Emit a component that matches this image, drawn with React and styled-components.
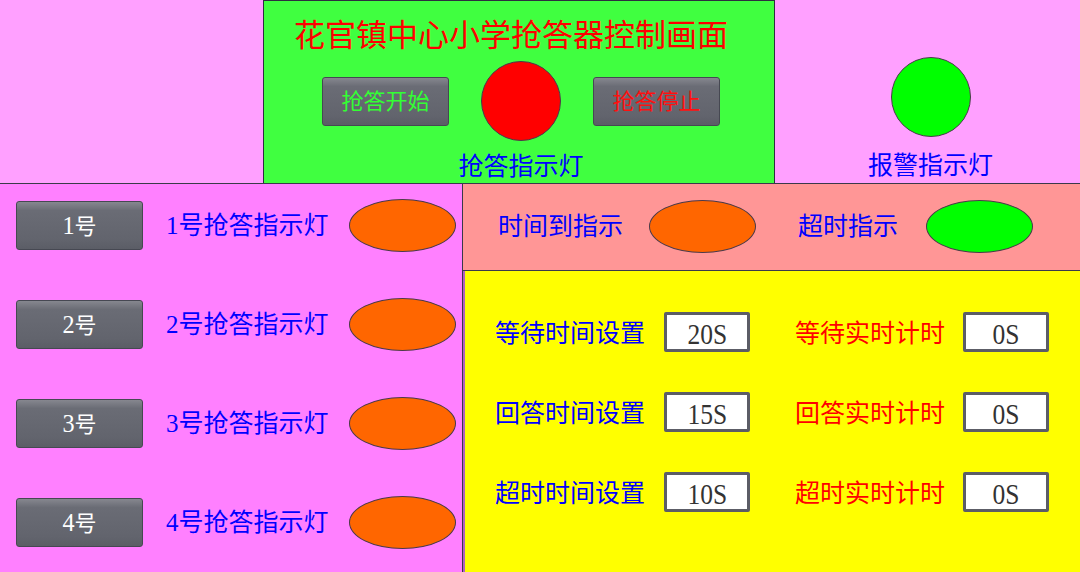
import React from "react";
import styled, { createGlobalStyle } from "styled-components";

const Global = createGlobalStyle`
  html, body { margin: 0; padding: 0; }
  body {
    font-family: "Liberation Serif", "Noto Sans CJK SC", serif;
    background: #ff80ff;
  }
`;

const Page = styled.div`
  width: 1080px;
  height: 572px;
  display: grid;
  grid-template-rows: 184px 1fr;
  overflow: hidden;
`;

const TopBar = styled.div`
  display: flex;
  background: #ffa0ff;
  border-bottom: 1px solid #3a3a4a;
  box-sizing: border-box;
`;

const Spacer = styled.div`
  width: ${(p) => p.$w}px;
  flex: none;
`;

const ControlPanel = styled.section`
  width: 512px;
  flex: none;
  box-sizing: border-box;
  background: #40ff40;
  border: 1px solid #2e2e40;
  border-bottom: none;
  display: flex;
  flex-direction: column;
  align-items: center;
  padding-top: 19px;
  padding-left: 4px;
`;

const Title = styled.h1`
  margin: 0 0 0 -20px;
  font-size: 31px;
  line-height: 31px;
  font-weight: normal;
  color: #ff0000;
  white-space: nowrap;
`;

const ControlRow = styled.div`
  display: flex;
  align-items: center;
  gap: 32px;
  margin-top: 10px;
  height: 80px;
`;

const GrayButton = styled.button`
  width: ${(p) => p.$w || 127}px;
  height: 49px;
  box-sizing: border-box;
  border: 1px solid #464852;
  border-radius: 3px;
  background: linear-gradient(#86878f 0%, #6a6c75 18%, #62646d 80%, #5b5d66 100%);
  color: ${(p) => p.$color};
  font-family: "Liberation Serif", "Noto Sans CJK SC", serif;
  font-size: 22px;
  line-height: 1;
  padding: 2px 0 0;
  display: flex;
  align-items: center;
  justify-content: center;
  flex: none;
  cursor: pointer;
`;

const Digit = styled.span`
  font-size: 1.1em;
  line-height: 1;
`;

const Lamp = styled.div`
  width: ${(p) => p.$w}px;
  height: ${(p) => p.$h}px;
  border-radius: 50%;
  background: ${(p) => p.$color};
  border: 1px solid #4a3a4a;
  box-sizing: border-box;
  flex: none;
`;

const Caption = styled.div`
  font-size: 25px;
  line-height: 25px;
  color: #0000ff;
  white-space: nowrap;
  margin-top: ${(p) => p.$mt || 0}px;
`;

const AlarmArea = styled.section`
  flex: 1;
  display: flex;
  flex-direction: column;
  align-items: center;
  padding-top: 57px;
  padding-left: 6px;
`;

const Bottom = styled.div`
  display: flex;
  min-height: 0;
`;

const Stations = styled.section`
  width: 463px;
  flex: none;
  box-sizing: border-box;
  background: #ff80ff;
  border-right: 1px solid #3a3a4a;
  display: flex;
  flex-direction: column;
  gap: 46px;
  padding: 15px 0 0 16px;
`;

const StationRow = styled.div`
  display: flex;
  align-items: center;
  height: 53px;
`;

const StationLabel = styled.div`
  width: 183px;
  margin-left: 23px;
  font-size: 25px;
  line-height: 25px;
  color: #0000ff;
  white-space: nowrap;
`;

const RightCol = styled.div`
  flex: 1;
  display: flex;
  flex-direction: column;
`;

const StatusBar = styled.section`
  height: 87px;
  box-sizing: border-box;
  background: #ff9696;
  border-bottom: 1px solid #3a3a4a;
  display: flex;
  align-items: center;
  padding-left: 35px;
  padding-bottom: 1px;
`;

const StatusLabel = styled.div`
  width: ${(p) => p.$w}px;
  margin-left: ${(p) => p.$ml || 0}px;
  flex: none;
  font-size: 25px;
  line-height: 25px;
  color: #0000ff;
  white-space: nowrap;
`;

const TimerPanel = styled.section`
  flex: 1;
  background: #ffff00;
  border-left: 2px solid #b060c0;
  display: grid;
  grid-template-columns: 169px 86px 45px 168px 86px;
  grid-auto-rows: 40px;
  row-gap: 40px;
  align-content: start;
  align-items: center;
  padding: 41px 0 0 30px;
`;

const TimerLabel = styled.div`
  font-size: 25px;
  line-height: 25px;
  padding-top: 3px;
  color: ${(p) => p.$color};
  white-space: nowrap;
  grid-column: ${(p) => p.$col};
`;

const ValueBox = styled.div`
  height: 40px;
  box-sizing: border-box;
  border: 3px solid #5c5d66;
  border-radius: 2px;
  background: #ffffff;
  color: #333333;
  font-size: 30px;
  line-height: 1;
  display: flex;
  align-items: center;
  justify-content: center;
  padding-top: 3px;
  grid-column: ${(p) => p.$col};
`;

const ValueText = styled.span`
  display: inline-block;
  transform: scaleX(0.85);
`;

const stations = [1, 2, 3, 4];
const timers = [
  ["等待时间设置", "20S", "等待实时计时", "0S"],
  ["回答时间设置", "15S", "回答实时计时", "0S"],
  ["超时时间设置", "10S", "超时实时计时", "0S"],
];

export default function App() {
  return (
    <>
      <Global />
      <Page>
        <TopBar>
          <Spacer $w={263} />
          <ControlPanel>
            <Title>花官镇中心小学抢答器控制画面</Title>
            <ControlRow>
              <GrayButton $color="#33ff33">抢答开始</GrayButton>
              <Lamp $w={80} $h={80} $color="#ff0000" />
              <GrayButton $color="#ff1010">抢答停止</GrayButton>
            </ControlRow>
            <Caption $mt={13}>抢答指示灯</Caption>
          </ControlPanel>
          <AlarmArea>
            <Lamp $w={80} $h={80} $color="#00ff00" />
            <Caption $mt={16}>报警指示灯</Caption>
          </AlarmArea>
        </TopBar>
        <Bottom>
          <Stations>
            {stations.map((n) => (
              <StationRow key={n}>
                <GrayButton $color="#ffffff">
                  <Digit>{n}</Digit>号
                </GrayButton>
                <StationLabel>{n}号抢答指示灯</StationLabel>
                <Lamp $w={107} $h={53} $color="#ff6600" />
              </StationRow>
            ))}
          </Stations>
          <RightCol>
            <StatusBar>
              <StatusLabel $w={151}>时间到指示</StatusLabel>
              <Lamp $w={107} $h={53} $color="#ff6600" />
              <StatusLabel $w={128} $ml={42}>超时指示</StatusLabel>
              <Lamp $w={107} $h={53} $color="#00ff00" />
            </StatusBar>
            <TimerPanel>
              {timers.map(([a, av, b, bv]) => (
                <React.Fragment key={a}>
                  <TimerLabel $color="#0000ff" $col={1}>{a}</TimerLabel>
                  <ValueBox $col={2}><ValueText>{av}</ValueText></ValueBox>
                  <TimerLabel $color="#ff0000" $col={4}>{b}</TimerLabel>
                  <ValueBox $col={5}><ValueText>{bv}</ValueText></ValueBox>
                </React.Fragment>
              ))}
            </TimerPanel>
          </RightCol>
        </Bottom>
      </Page>
    </>
  );
}
